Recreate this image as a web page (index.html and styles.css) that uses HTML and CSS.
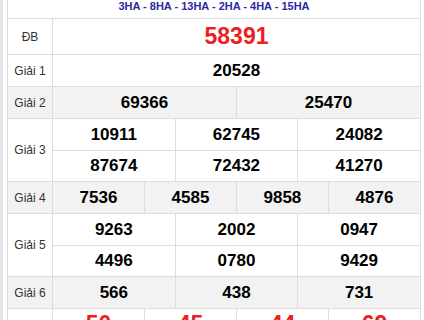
FILE: index.html
```html
<!DOCTYPE html>
<html lang="vi">
<head>
    <meta charset="UTF-8">
    <meta name="viewport" content="width=device-width, initial-scale=1.0">
    <title>Kết quả xổ số</title>
    <link rel="stylesheet" href="styles.css">
</head>
<body>
    <div class="page">
        <table class="kq">
            <colgroup>
                <col class="col-label">
                <col span="12">
            </colgroup>
            <tr class="head">
                <td colspan="13">3HA - 8HA - 13HA - 2HA - 4HA - 15HA</td>
            </tr>
            <tr class="row-db">
                <td class="label">ĐB</td>
                <td colspan="12" class="num big">58391</td>
            </tr>
            <tr>
                <td class="label">Giải 1</td>
                <td colspan="12" class="num">20528</td>
            </tr>
            <tr class="alt">
                <td class="label">Giải 2</td>
                <td colspan="6" class="num">69366</td>
                <td colspan="6" class="num">25470</td>
            </tr>
            <tr>
                <td class="label" rowspan="2">Giải 3</td>
                <td colspan="4" class="num">10911</td>
                <td colspan="4" class="num">62745</td>
                <td colspan="4" class="num">24082</td>
            </tr>
            <tr class="short">
                <td colspan="4" class="num">87674</td>
                <td colspan="4" class="num">72432</td>
                <td colspan="4" class="num">41270</td>
            </tr>
            <tr class="alt">
                <td class="label">Giải 4</td>
                <td colspan="3" class="num">7536</td>
                <td colspan="3" class="num">4585</td>
                <td colspan="3" class="num">9858</td>
                <td colspan="3" class="num">4876</td>
            </tr>
            <tr>
                <td class="label" rowspan="2">Giải 5</td>
                <td colspan="4" class="num">9263</td>
                <td colspan="4" class="num">2002</td>
                <td colspan="4" class="num">0947</td>
            </tr>
            <tr class="short">
                <td colspan="4" class="num">4496</td>
                <td colspan="4" class="num">0780</td>
                <td colspan="4" class="num">9429</td>
            </tr>
            <tr class="alt">
                <td class="label">Giải 6</td>
                <td colspan="4" class="num">566</td>
                <td colspan="4" class="num">438</td>
                <td colspan="4" class="num">731</td>
            </tr>
            <tr>
                <td class="label">Giải 7</td>
                <td colspan="3" class="num big">50</td>
                <td colspan="3" class="num big">45</td>
                <td colspan="3" class="num big">44</td>
                <td colspan="3" class="num big">69</td>
            </tr>
        </table>
    </div>
</body>
</html>
```

FILE: styles.css
```css
body {
    margin: 0;
    font-family: "Liberation Sans", Arial, sans-serif;
    background: #fff;
}
.page {
    border-left: 3px solid #e6e6e6;
    padding: 0 3px 0 4px;
}
.kq {
    width: 100%;
    table-layout: fixed;
    border-collapse: collapse;
}
.col-label {
    width: 45px;
}
.kq td {
    border: 1px solid #e0ddd8;
    padding: 0;
    height: 31px;
    text-align: center;
    vertical-align: middle;
}
.kq .short td {
    height: 30px;
}
.kq .head td {
    border-top: none;
    height: 17px;
    vertical-align: top;
    padding-top: 1px;
    font-size: 11px;
    line-height: 11px;
    font-weight: bold;
    color: #2a2aa0;
}
.kq .row-db td {
    height: 35px;
}
.alt td {
    background: #f2f2f2;
}
.label {
    font-size: 12px;
    color: #333;
}
.num {
    font-size: 17px;
    font-weight: bold;
    color: #000;
}
.num.big {
    font-size: 23px;
    color: #ee1d23;
}
```
